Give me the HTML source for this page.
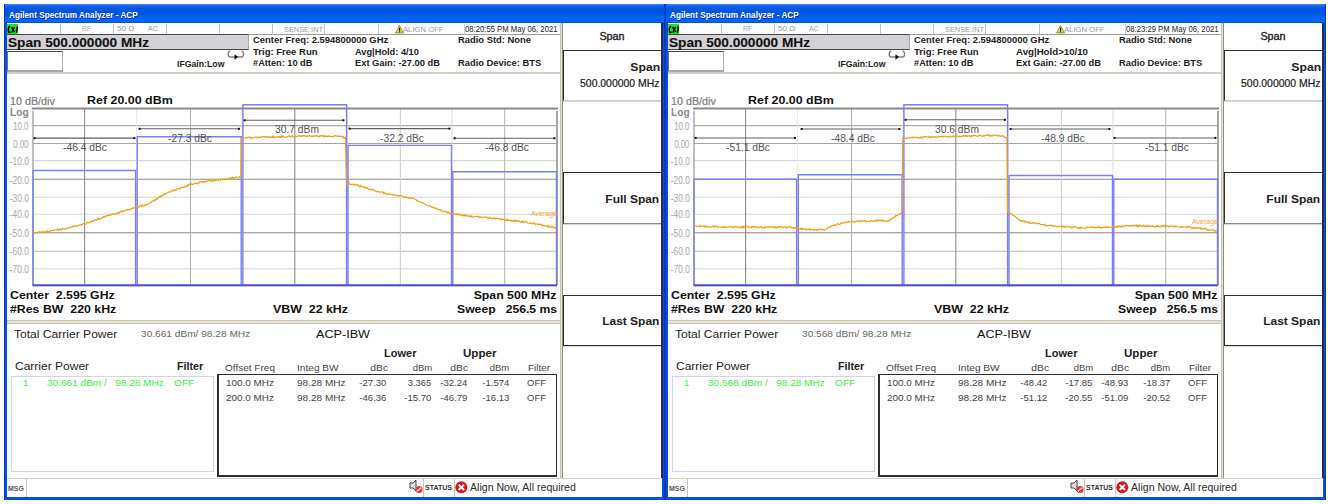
<!DOCTYPE html><html><head><meta charset="utf-8"><style>
html,body{margin:0;padding:0;background:#fff;width:1331px;height:504px;overflow:hidden;}
body{font-family:"Liberation Sans", sans-serif;position:relative;}
.t{position:absolute;white-space:nowrap;line-height:1;}
.r{position:absolute;}
.win{position:absolute;top:0;width:665px;height:504px;}
</style></head><body>
<div class="r" style="left:4.00px;top:4.00px;width:661.00px;height:495.50px;background:linear-gradient(#3a86ff 0px,#1a6cf0 1.5px,#0056e0 4px,#0055de 10px,#0066f6 14px,#0064f4 17.5px,#0046cc 19.3px,#0a50e4 21px,#0650e0);"></div>
<div class="r" style="left:7.00px;top:23.30px;width:655.00px;height:474.00px;background:#fff;"></div>
<div class="r" style="left:4.00px;top:4.00px;width:1.00px;height:495.50px;background:#0838c8;"></div>
<div class="r" style="left:664.00px;top:4.00px;width:1.20px;height:495.50px;background:#0838c8;"></div>
<div class="t" style="left:9.20px;top:11.07px;font-size:8.3px;font-weight:bold;color:#fff;text-shadow:0.5px 0.5px 0 #0a2a90;transform:scaleX(0.9918);transform-origin:left 0;">Agilent Spectrum Analyzer - ACP</div>
<div class="r" style="left:665.00px;top:4.00px;width:661.00px;height:495.50px;background:linear-gradient(#3a86ff 0px,#1a6cf0 1.5px,#0056e0 4px,#0055de 10px,#0066f6 14px,#0064f4 17.5px,#0046cc 19.3px,#0a50e4 21px,#0650e0);"></div>
<div class="r" style="left:668.00px;top:23.30px;width:655.00px;height:474.00px;background:#fff;"></div>
<div class="r" style="left:665.00px;top:4.00px;width:1.00px;height:495.50px;background:#0838c8;"></div>
<div class="r" style="left:1325.00px;top:4.00px;width:1.20px;height:495.50px;background:#0838c8;"></div>
<div class="t" style="left:670.20px;top:11.07px;font-size:8.3px;font-weight:bold;color:#fff;text-shadow:0.5px 0.5px 0 #0a2a90;transform:scaleX(0.9918);transform-origin:left 0;">Agilent Spectrum Analyzer - ACP</div>
<div class="win" style="left:0px">
<div class="r" style="left:7.00px;top:23.30px;width:553.00px;height:10.50px;background:#fff;"></div>
<div class="r" style="left:7.00px;top:24.00px;width:10.50px;height:9.50px;background:#1ee01e;"></div>
<svg class="r" style="left:7px;top:24px" width="11" height="10"><path d="M3,2 C1,3.5 0.8,7 2,8.5 L3.5,8 M4.5,3 L7.5,8 M7.5,3 L4.8,8.5 M10,2.5 C10.3,4.5 10.2,6.5 9.2,8.5" fill="none" stroke="#000" stroke-width="1.5"/></svg>
<div class="r" style="left:60.00px;top:23.50px;width:1.00px;height:10.00px;background:#c4c4c4;"></div>
<div class="r" style="left:112.50px;top:23.50px;width:1.00px;height:10.00px;background:#c4c4c4;"></div>
<div class="r" style="left:165.50px;top:23.50px;width:1.00px;height:10.00px;background:#c4c4c4;"></div>
<div class="r" style="left:218.50px;top:23.50px;width:1.00px;height:10.00px;background:#c4c4c4;"></div>
<div class="r" style="left:271.50px;top:23.50px;width:1.00px;height:10.00px;background:#c4c4c4;"></div>
<div class="r" style="left:324.00px;top:23.50px;width:1.00px;height:10.00px;background:#c4c4c4;"></div>
<div class="r" style="left:377.50px;top:23.50px;width:1.00px;height:10.00px;background:#c4c4c4;"></div>
<div class="t" style="left:81.50px;top:25.43px;font-size:8px;font-weight:normal;color:#9a9a9a;transform:scaleX(0.8527);transform-origin:left 0;">RF</div>
<div class="t" style="left:116.90px;top:25.43px;font-size:8px;font-weight:normal;color:#9a9a9a;transform:scaleX(1.0053);transform-origin:left 0;">50 &#937;</div>
<div class="t" style="left:147.70px;top:25.43px;font-size:8px;font-weight:normal;color:#9a9a9a;transform:scaleX(0.8719);transform-origin:left 0;">AC</div>
<div class="t" style="left:284.00px;top:25.85px;font-size:7.5px;font-weight:normal;color:#9a9a9a;transform:scaleX(0.9850);transform-origin:left 0;">SENSE:INT</div>
<svg class="r" style="left:394.5px;top:25px" width="9" height="8.5"><polygon points="4.5,0.5 8.5,8 0.5,8" fill="#f0e000" stroke="#666" stroke-width="0.7"/><rect x="4" y="2.8" width="1.1" height="3" fill="#000"/><rect x="4" y="6.3" width="1.1" height="1" fill="#000"/></svg>
<div class="t" style="left:402.50px;top:25.60px;font-size:7.8px;font-weight:normal;color:#9a9a9a;transform:scaleX(0.9841);transform-origin:left 0;">ALIGN OFF</div>
<div class="r" style="left:463.80px;top:24.00px;width:1.00px;height:9.50px;background:#d0d0d0;"></div>
<div class="t" style="left:464.60px;top:25.47px;font-size:8.3px;font-weight:normal;color:#222;transform:scaleX(0.9283);transform-origin:left 0;">08:20:55 PM May 06, 2021</div>
<div class="r" style="left:7.00px;top:33.50px;width:553.00px;height:1.00px;background:#a0a0a0;"></div>
<div class="r" style="left:7.00px;top:33.50px;width:241.50px;height:16.00px;background:#d3d1d5;border-top:1.5px solid #4a4a4a;border-bottom:1.5px solid #4a4a4a;border-right:1px solid #aaa;box-sizing:border-box;"></div>
<div class="t" style="left:7.80px;top:35.83px;font-size:13.2px;font-weight:bold;color:#111;-webkit-text-stroke:0.12px #111;transform:scaleX(1.0340);transform-origin:left 0;">Span 500.000000 MHz</div>
<div class="r" style="left:7.00px;top:51.00px;width:56.00px;height:20.50px;background:#fff;border-top:1.5px solid #505050;border-left:1px solid #707070;border-bottom:2px solid #a8a8a8;border-right:1px solid #b0b0b0;box-sizing:border-box;"></div>
<div class="t" style="left:177.00px;top:59.89px;font-size:8.4px;font-weight:bold;color:#222;transform:scaleX(1.0396);transform-origin:left 0;">IFGain:Low</div>
<svg class="r" style="left:227px;top:49px" width="19" height="11"><path d="M3.2,2 C0.6,2.6 0.3,8 3.5,8 L14.3,8 C17.5,8 17.2,2.6 14.6,2" fill="none" stroke="#808080" stroke-width="1.3"/><polygon points="7.5,5.3 11,8 7.5,10.8" fill="#000"/></svg>
<div class="t" style="left:252.50px;top:36.22px;font-size:8.6px;font-weight:bold;color:#222;transform:scaleX(1.0970);transform-origin:left 0;">Center Freq: 2.594800000 GHz</div>
<div class="t" style="left:252.50px;top:47.62px;font-size:8.6px;font-weight:bold;color:#222;transform:scaleX(1.1087);transform-origin:left 0;">Trig: Free Run</div>
<div class="t" style="left:252.50px;top:58.92px;font-size:8.6px;font-weight:bold;color:#222;transform:scaleX(1.0724);transform-origin:left 0;">#Atten: 10 dB</div>
<div class="t" style="left:355.40px;top:47.62px;font-size:8.6px;font-weight:bold;color:#222;transform:scaleX(1.0759);transform-origin:left 0;">Avg|Hold: 4/10</div>
<div class="t" style="left:355.40px;top:58.92px;font-size:8.6px;font-weight:bold;color:#222;transform:scaleX(1.0839);transform-origin:left 0;">Ext Gain: -27.00 dB</div>
<div class="t" style="left:457.80px;top:36.22px;font-size:8.6px;font-weight:bold;color:#222;transform:scaleX(1.0921);transform-origin:left 0;">Radio Std: None</div>
<div class="t" style="left:457.80px;top:58.92px;font-size:8.6px;font-weight:bold;color:#222;transform:scaleX(1.0887);transform-origin:left 0;">Radio Device: BTS</div>
<div class="r" style="left:7.00px;top:72.00px;width:553.00px;height:1.50px;background:#d2cec4;"></div>
<div class="t" style="left:10.00px;top:96.31px;font-size:10.5px;font-weight:normal;color:#7a7a7a;-webkit-text-stroke:0.2px #7a7a7a;transform:scaleX(1.0233);transform-origin:left 0;">10 dB/div</div>
<div class="t" style="left:87.00px;top:95.31px;font-size:11.8px;font-weight:bold;color:#111;transform:scaleX(1.0540);transform-origin:left 0;">Ref 20.00 dBm</div>
<div class="t" style="left:10.00px;top:106.61px;font-size:10.5px;font-weight:bold;color:#8a8a8a;transform:scaleX(0.9662);transform-origin:left 0;">Log</div>
<div class="t" style="right:636.20px;top:121.83px;font-size:10px;font-weight:normal;color:#a6a6a6;transform:scaleX(0.7807);transform-origin:right 0;">10.0</div>
<div class="t" style="right:636.20px;top:139.73px;font-size:10px;font-weight:normal;color:#a6a6a6;transform:scaleX(0.7807);transform-origin:right 0;">0.00</div>
<div class="t" style="right:636.20px;top:156.83px;font-size:10px;font-weight:normal;color:#a6a6a6;transform:scaleX(0.8334);transform-origin:right 0;">-10.0</div>
<div class="t" style="right:636.20px;top:175.53px;font-size:10px;font-weight:normal;color:#a6a6a6;transform:scaleX(0.8334);transform-origin:right 0;">-20.0</div>
<div class="t" style="right:636.20px;top:193.53px;font-size:10px;font-weight:normal;color:#a6a6a6;transform:scaleX(0.8334);transform-origin:right 0;">-30.0</div>
<div class="t" style="right:636.20px;top:210.43px;font-size:10px;font-weight:normal;color:#a6a6a6;transform:scaleX(0.8334);transform-origin:right 0;">-40.0</div>
<div class="t" style="right:636.20px;top:228.93px;font-size:10px;font-weight:normal;color:#a6a6a6;transform:scaleX(0.8334);transform-origin:right 0;">-50.0</div>
<div class="t" style="right:636.20px;top:247.43px;font-size:10px;font-weight:normal;color:#a6a6a6;transform:scaleX(0.8334);transform-origin:right 0;">-60.0</div>
<div class="t" style="right:636.20px;top:264.94px;font-size:10px;font-weight:normal;color:#a6a6a6;transform:scaleX(0.8334);transform-origin:right 0;">-70.0</div>
<svg class="r" style="left:0;top:0" width="665" height="320">
<line x1="33" y1="125.60" x2="556.5" y2="125.60" stroke="#acacac" stroke-width="1.1"/>
<line x1="33" y1="143.50" x2="556.5" y2="143.50" stroke="#a4a4a4" stroke-width="1.1"/>
<line x1="33" y1="160.60" x2="556.5" y2="160.60" stroke="#d8d8d8" stroke-width="1.1"/>
<line x1="33" y1="179.30" x2="556.5" y2="179.30" stroke="#8c8c8c" stroke-width="1.1"/>
<line x1="33" y1="197.30" x2="556.5" y2="197.30" stroke="#d8d8d8" stroke-width="1.1"/>
<line x1="33" y1="214.20" x2="556.5" y2="214.20" stroke="#d8d8d8" stroke-width="1.1"/>
<line x1="33" y1="232.70" x2="556.5" y2="232.70" stroke="#8c8c8c" stroke-width="1.1"/>
<line x1="33" y1="251.20" x2="556.5" y2="251.20" stroke="#b8b8b8" stroke-width="1.1"/>
<line x1="33" y1="268.70" x2="556.5" y2="268.70" stroke="#d8d8d8" stroke-width="1.1"/>
<line x1="84.60" y1="108.4" x2="84.60" y2="284.7" stroke="#8c8c8c" stroke-width="1.1"/>
<line x1="136.50" y1="108.4" x2="136.50" y2="284.7" stroke="#e8e8e8" stroke-width="1.1"/>
<line x1="190.50" y1="108.4" x2="190.50" y2="284.7" stroke="#b4b4b4" stroke-width="1.1"/>
<line x1="242.00" y1="108.4" x2="242.00" y2="284.7" stroke="#e4e4e4" stroke-width="1.1"/>
<line x1="294.80" y1="108.4" x2="294.80" y2="284.7" stroke="#8c8c8c" stroke-width="1.1"/>
<line x1="347.00" y1="108.4" x2="347.00" y2="284.7" stroke="#e4e4e4" stroke-width="1.1"/>
<line x1="400.40" y1="108.4" x2="400.40" y2="284.7" stroke="#d2d2d2" stroke-width="1.1"/>
<line x1="452.00" y1="108.4" x2="452.00" y2="284.7" stroke="#dedede" stroke-width="1.1"/>
<line x1="504.70" y1="108.4" x2="504.70" y2="284.7" stroke="#b8b8b8" stroke-width="1.1"/>
<line x1="32" y1="108.4" x2="558" y2="108.4" stroke="#8a8a8a" stroke-width="2"/>
<line x1="33" y1="110.8" x2="33" y2="285" stroke="#959595" stroke-width="1.2"/>
<line x1="557" y1="111" x2="557" y2="285" stroke="#8a8a8a" stroke-width="1.5"/>
<polyline points="33,285 33,170.5 135.6,170.5 135.6,285" fill="none" stroke="#7c7cff" stroke-width="1.4"/>
<polyline points="137.2,285 137.2,136.8 241.2,136.8 241.2,285" fill="none" stroke="#7c7cff" stroke-width="1.4"/>
<polyline points="242.9,285 242.9,104.8 346.6,104.8 346.6,285" fill="none" stroke="#7c7cff" stroke-width="1.4"/>
<polyline points="348,285 348,145.4 451.5,145.4 451.5,285" fill="none" stroke="#7c7cff" stroke-width="1.4"/>
<polyline points="452.8,285 452.8,171.7 556.5,171.7 556.5,285" fill="none" stroke="#7c7cff" stroke-width="1.4"/>
<line x1="32.5" y1="286.2" x2="557" y2="286.2" stroke="#a8a8a8" stroke-width="1"/>
<line x1="32.5" y1="285.1" x2="557" y2="285.1" stroke="#5050c8" stroke-width="1.6"/>
<path d="M33.0,232.4 L33.7,233.4 L34.4,233.2 L35.1,232.4 L35.8,232.7 L36.5,232.5 L37.2,232.8 L37.9,232.9 L38.6,231.8 L39.3,231.7 L40.0,232.8 L40.7,232.1 L41.4,232.6 L42.1,231.4 L42.8,232.0 L43.5,232.3 L44.2,231.5 L44.9,232.5 L45.6,232.4 L46.3,231.1 L47.0,231.0 L47.7,231.6 L48.4,232.1 L49.1,231.2 L49.8,230.8 L50.5,231.0 L51.2,230.3 L52.0,230.4 L52.7,230.6 L53.4,230.6 L54.1,230.1 L54.8,230.0 L55.5,229.8 L56.2,230.1 L56.9,229.7 L57.6,229.2 L58.3,230.3 L59.0,229.7 L59.8,229.7 L60.5,228.9 L61.2,230.0 L61.9,229.7 L62.6,228.5 L63.3,228.7 L64.0,229.1 L64.7,228.9 L65.4,229.1 L66.1,228.2 L66.9,228.6 L67.6,228.2 L68.3,227.5 L69.0,227.8 L69.7,228.0 L70.4,227.8 L71.1,227.1 L71.9,227.1 L72.6,226.1 L73.3,226.2 L74.0,226.9 L74.7,226.2 L75.4,225.6 L76.1,226.0 L76.9,226.1 L77.6,225.9 L78.3,225.3 L79.0,225.2 L79.7,225.1 L80.4,225.4 L81.1,224.8 L81.9,224.4 L82.6,224.4 L83.3,223.6 L84.0,223.4 L84.7,224.2 L85.4,224.3 L86.1,223.5 L86.8,222.9 L87.5,222.3 L88.3,222.6 L89.0,223.0 L89.7,222.5 L90.4,221.9 L91.1,222.1 L91.8,220.9 L92.5,221.1 L93.2,221.5 L93.9,220.6 L94.6,220.2 L95.4,219.7 L96.1,219.8 L96.8,220.2 L97.5,218.5 L98.2,219.4 L98.9,219.2 L99.6,219.1 L100.3,218.6 L101.0,218.4 L101.7,217.8 L102.5,217.6 L103.2,217.1 L103.9,216.3 L104.6,217.3 L105.3,216.6 L106.0,215.7 L106.7,216.0 L107.4,215.8 L108.1,215.4 L108.8,215.2 L109.5,215.3 L110.2,215.2 L111.0,215.0 L111.7,214.6 L112.4,213.7 L113.1,213.8 L113.8,213.6 L114.5,214.0 L115.2,214.2 L115.9,213.9 L116.6,213.7 L117.3,213.5 L118.0,212.5 L118.8,213.2 L119.5,212.7 L120.2,211.7 L120.9,211.4 L121.6,211.2 L122.3,212.1 L123.0,211.1 L123.7,210.7 L124.4,211.3 L125.2,210.6 L125.9,210.0 L126.6,209.9 L127.3,210.2 L128.1,209.5 L128.8,209.4 L129.5,209.9 L130.2,209.3 L130.9,208.8 L131.7,208.9 L132.4,208.0 L133.1,208.3 L133.8,208.1 L134.6,207.6 L135.3,207.2 L136.0,208.2 L136.7,207.4 L137.4,206.8 L138.1,207.2 L138.8,207.3 L139.5,205.9 L140.2,205.7 L140.9,205.7 L141.6,206.3 L142.4,205.3 L143.1,205.9 L143.8,205.7 L144.5,205.3 L145.2,204.6 L145.9,205.5 L146.6,205.0 L147.3,204.4 L148.0,203.8 L148.7,204.0 L149.4,203.2 L150.1,203.0 L150.8,202.2 L151.5,202.2 L152.2,200.9 L153.0,200.8 L153.7,201.4 L154.4,200.8 L155.1,199.5 L155.8,199.9 L156.5,198.7 L157.2,199.2 L157.9,198.4 L158.6,197.5 L159.3,196.8 L160.0,196.0 L160.8,196.9 L161.5,195.2 L162.2,195.9 L162.9,195.7 L163.6,194.7 L164.3,193.6 L165.0,194.3 L165.7,194.1 L166.4,193.5 L167.1,192.9 L167.9,192.5 L168.6,192.2 L169.3,191.7 L170.0,192.1 L170.7,191.5 L171.4,190.9 L172.1,190.5 L172.9,191.1 L173.6,190.2 L174.3,190.3 L175.0,189.8 L175.7,190.3 L176.4,190.1 L177.1,188.5 L177.9,188.5 L178.6,188.4 L179.3,189.2 L180.0,188.6 L180.7,187.7 L181.4,187.2 L182.1,187.7 L182.9,187.6 L183.6,187.5 L184.3,186.4 L185.0,186.9 L185.7,186.4 L186.4,185.8 L187.1,186.3 L187.9,184.9 L188.6,185.4 L189.3,184.1 L190.0,184.0 L190.7,185.0 L191.4,183.8 L192.1,184.5 L192.8,184.1 L193.5,184.3 L194.2,183.5 L195.0,183.3 L195.7,183.1 L196.4,183.8 L197.1,183.2 L197.8,183.6 L198.5,183.4 L199.2,182.1 L199.9,182.6 L200.6,181.8 L201.3,181.5 L202.0,181.5 L202.8,182.5 L203.5,182.2 L204.2,182.2 L204.9,181.3 L205.6,181.6 L206.3,181.7 L207.0,180.9 L207.7,181.1 L208.4,180.5 L209.1,180.3 L209.8,180.5 L210.5,181.3 L211.2,180.8 L212.0,181.2 L212.7,180.5 L213.4,180.1 L214.1,180.8 L214.8,180.8 L215.5,179.5 L216.2,180.4 L216.9,179.5 L217.6,179.5 L218.3,180.5 L219.0,179.2 L219.8,179.4 L220.5,180.5 L221.2,179.6 L221.9,179.0 L222.6,179.0 L223.3,179.1 L224.0,179.8 L224.7,178.7 L225.4,179.8 L226.1,178.9 L226.8,179.7 L227.5,179.5 L228.2,178.5 L229.0,178.3 L229.7,178.5 L230.4,177.9 L231.1,178.6 L231.8,177.6 L232.5,177.4 L233.2,178.8 L233.9,177.6 L234.6,178.0 L235.3,177.7 L236.0,177.3 L236.8,176.9 L237.5,178.0 L238.2,178.0 L238.9,177.9 L239.6,176.5 L240.3,176.6 L241.0,176.9 L241.8,138.0 L243.0,138.0 L243.7,138.5 L244.4,137.8 L245.1,138.0 L245.8,138.0 L246.6,137.3 L247.3,137.7 L248.0,137.4 L248.7,137.3 L249.4,137.0 L250.1,137.3 L250.8,138.3 L251.5,137.5 L252.2,137.8 L252.9,137.7 L253.7,138.1 L254.4,137.3 L255.1,137.2 L255.8,137.2 L256.5,137.1 L257.2,137.9 L257.9,137.9 L258.6,137.0 L259.3,137.1 L260.1,137.4 L260.8,137.4 L261.5,137.4 L262.2,136.8 L262.9,136.5 L263.6,136.8 L264.3,136.5 L265.0,137.2 L265.7,136.5 L266.4,136.5 L267.2,137.3 L267.9,136.7 L268.6,137.5 L269.3,137.0 L270.0,137.5 L270.7,136.5 L271.4,137.0 L272.1,137.4 L272.8,136.3 L273.5,137.6 L274.2,136.4 L274.9,137.3 L275.6,137.6 L276.3,137.3 L277.0,136.5 L277.7,136.2 L278.4,136.8 L279.1,137.4 L279.8,136.4 L280.5,137.3 L281.2,136.2 L281.9,137.3 L282.6,136.0 L283.4,136.4 L284.1,137.2 L284.8,137.1 L285.5,137.2 L286.2,137.1 L286.9,136.9 L287.6,136.8 L288.3,136.0 L289.0,136.4 L289.7,136.0 L290.4,136.8 L291.1,136.7 L291.8,136.0 L292.5,135.7 L293.2,137.1 L293.9,136.8 L294.6,136.4 L295.3,136.4 L296.0,136.8 L296.7,136.2 L297.4,136.1 L298.1,136.0 L298.8,135.9 L299.5,135.5 L300.2,136.5 L300.9,136.1 L301.6,136.3 L302.4,135.6 L303.1,136.0 L303.8,135.7 L304.5,135.6 L305.2,135.8 L305.9,136.7 L306.6,136.0 L307.3,136.0 L308.0,136.3 L308.7,135.7 L309.4,135.4 L310.1,136.2 L310.8,136.1 L311.5,136.3 L312.2,136.0 L312.9,136.4 L313.6,136.4 L314.4,135.7 L315.1,136.1 L315.8,136.0 L316.5,135.6 L317.2,135.9 L317.9,136.1 L318.6,136.6 L319.3,136.6 L320.0,135.7 L320.7,136.2 L321.4,135.3 L322.1,135.4 L322.9,136.0 L323.6,136.6 L324.3,135.5 L325.0,136.4 L325.7,136.6 L326.4,135.8 L327.1,136.4 L327.9,136.6 L328.6,135.9 L329.3,136.4 L330.0,136.5 L330.7,136.2 L331.4,136.6 L332.1,136.7 L332.9,136.8 L333.6,136.2 L334.3,135.7 L335.0,135.8 L335.7,135.7 L336.4,136.3 L337.1,136.6 L337.9,135.5 L338.6,136.5 L339.3,136.5 L340.0,136.0 L340.8,136.4 L341.6,136.1 L342.4,137.1 L343.1,136.3 L343.9,137.9 L344.7,137.8 L345.5,137.5 L346.5,183.8 L347.2,183.3 L347.9,184.4 L348.6,184.5 L349.3,183.4 L350.0,184.4 L350.8,184.6 L351.5,184.4 L352.2,184.5 L352.9,184.2 L353.6,185.0 L354.3,185.1 L355.0,184.3 L355.7,185.2 L356.4,184.9 L357.1,184.7 L357.8,185.1 L358.5,185.1 L359.2,186.5 L359.9,186.8 L360.6,185.7 L361.3,186.7 L362.0,186.6 L362.8,186.4 L363.5,186.9 L364.2,187.1 L364.9,188.1 L365.6,187.2 L366.3,187.7 L367.0,188.3 L367.7,187.9 L368.4,189.0 L369.1,189.2 L369.8,189.8 L370.5,189.1 L371.2,189.4 L371.9,189.9 L372.6,189.7 L373.4,190.3 L374.1,190.0 L374.8,190.8 L375.5,191.2 L376.2,191.4 L376.9,191.8 L377.6,191.4 L378.4,191.5 L379.1,192.2 L379.8,192.2 L380.5,192.1 L381.2,192.0 L381.9,192.0 L382.6,191.9 L383.4,193.2 L384.1,192.3 L384.8,193.4 L385.5,193.3 L386.2,194.1 L386.9,194.0 L387.6,194.5 L388.4,193.4 L389.1,194.1 L389.8,194.4 L390.5,194.2 L391.2,194.6 L391.9,194.5 L392.6,194.9 L393.4,194.2 L394.1,194.9 L394.8,195.1 L395.5,195.0 L396.2,195.2 L396.9,195.9 L397.6,195.8 L398.4,195.7 L399.1,196.0 L399.8,195.7 L400.5,195.6 L401.2,195.4 L402.0,196.0 L402.7,196.6 L403.4,197.2 L404.2,197.2 L404.9,196.9 L405.6,197.8 L406.4,197.1 L407.1,197.8 L407.9,197.3 L408.6,198.0 L409.3,198.5 L410.1,197.6 L410.8,197.6 L411.5,198.4 L412.3,198.4 L413.0,198.3 L413.7,198.1 L414.4,199.0 L415.1,199.3 L415.9,199.6 L416.6,200.6 L417.3,200.5 L418.0,201.1 L418.7,201.6 L419.4,201.7 L420.1,201.6 L420.9,202.3 L421.6,202.5 L422.3,202.8 L423.0,203.1 L423.7,203.1 L424.4,203.7 L425.1,204.0 L425.9,204.8 L426.6,204.9 L427.3,205.3 L428.0,205.5 L428.7,205.9 L429.4,205.9 L430.1,205.8 L430.9,206.0 L431.6,207.0 L432.3,207.5 L433.0,207.4 L433.7,207.1 L434.4,208.4 L435.1,208.2 L435.9,208.5 L436.6,208.2 L437.3,209.2 L438.0,209.9 L438.7,209.6 L439.5,209.7 L440.2,210.4 L440.9,209.7 L441.7,210.6 L442.4,211.5 L443.1,211.4 L443.9,211.1 L444.6,211.8 L445.4,211.9 L446.1,211.5 L446.8,211.7 L447.6,213.0 L448.3,212.3 L449.0,212.2 L449.8,213.6 L450.5,213.3 L451.2,213.2 L451.9,213.5 L452.6,214.0 L453.4,213.2 L454.1,214.1 L454.8,214.3 L455.5,214.5 L456.2,213.8 L456.9,214.4 L457.6,214.0 L458.4,214.6 L459.1,214.1 L459.8,215.1 L460.5,215.4 L461.2,214.7 L461.9,214.6 L462.6,215.8 L463.4,215.5 L464.1,215.9 L464.8,214.7 L465.5,216.1 L466.2,215.8 L466.9,215.5 L467.6,215.8 L468.4,216.4 L469.1,216.5 L469.8,215.7 L470.5,216.5 L471.2,215.9 L471.9,217.1 L472.6,216.4 L473.4,217.2 L474.1,217.0 L474.8,216.8 L475.5,216.4 L476.2,216.8 L476.9,216.3 L477.6,216.4 L478.4,217.3 L479.1,216.8 L479.8,217.5 L480.5,216.8 L481.2,217.6 L481.9,217.6 L482.6,217.1 L483.4,216.8 L484.1,217.3 L484.8,217.5 L485.5,217.0 L486.2,217.2 L486.9,217.1 L487.6,218.0 L488.4,218.5 L489.1,217.5 L489.8,217.3 L490.5,218.4 L491.2,218.6 L491.9,218.9 L492.6,218.4 L493.4,218.1 L494.1,218.9 L494.8,217.9 L495.5,218.8 L496.2,218.0 L496.9,218.5 L497.6,218.8 L498.3,218.7 L499.0,218.5 L499.7,218.6 L500.5,219.6 L501.2,219.2 L501.9,219.4 L502.6,219.0 L503.3,219.8 L504.0,219.3 L504.7,219.8 L505.4,220.4 L506.1,220.6 L506.8,219.3 L507.5,220.5 L508.2,220.7 L508.9,220.0 L509.7,220.1 L510.4,220.5 L511.1,221.1 L511.8,220.4 L512.5,221.2 L513.2,221.2 L513.9,220.3 L514.6,221.6 L515.3,220.3 L516.0,220.6 L516.7,221.5 L517.4,220.6 L518.1,221.2 L518.8,220.9 L519.6,221.5 L520.3,222.2 L521.0,222.4 L521.7,221.2 L522.4,221.3 L523.1,222.5 L523.8,221.4 L524.5,221.9 L525.2,221.7 L525.9,221.8 L526.6,221.8 L527.3,222.8 L528.0,223.0 L528.8,223.0 L529.5,223.4 L530.2,223.2 L530.9,222.9 L531.6,223.3 L532.3,223.9 L533.0,223.5 L533.7,223.1 L534.4,222.9 L535.2,224.4 L535.9,224.0 L536.6,223.8 L537.3,224.3 L538.0,224.4 L538.8,224.5 L539.5,223.9 L540.2,224.5 L540.9,224.7 L541.6,224.5 L542.3,225.7 L543.1,225.2 L543.8,225.7 L544.5,225.9 L545.2,226.1 L545.9,226.2 L546.7,226.4 L547.4,225.7 L548.1,227.0 L548.8,225.9 L549.5,227.2 L550.2,227.2 L551.0,227.3 L551.7,226.3 L552.4,226.5 L553.1,227.7 L553.8,227.3 L554.6,227.3 L555.3,228.4 L556.0,227.8" fill="none" stroke="#f0a014" stroke-width="1.2"/>
<line x1="34" y1="138.10000000000002" x2="135" y2="138.10000000000002" stroke="#606060" stroke-width="1.05"/>
<rect x="33.6" y="137.10000000000002" width="2" height="2" fill="#111"/>
<rect x="133.4" y="137.10000000000002" width="2" height="2" fill="#111"/>
<line x1="139" y1="128.8" x2="239.5" y2="128.8" stroke="#606060" stroke-width="1.05"/>
<rect x="138.6" y="127.80000000000001" width="2" height="2" fill="#111"/>
<rect x="237.9" y="127.80000000000001" width="2" height="2" fill="#111"/>
<line x1="244" y1="120.3" x2="344" y2="120.3" stroke="#606060" stroke-width="1.05"/>
<rect x="243.6" y="119.3" width="2" height="2" fill="#111"/>
<rect x="342.4" y="119.3" width="2" height="2" fill="#111"/>
<line x1="349" y1="128.60000000000002" x2="450" y2="128.60000000000002" stroke="#606060" stroke-width="1.05"/>
<rect x="348.6" y="127.60000000000002" width="2" height="2" fill="#111"/>
<rect x="448.4" y="127.60000000000002" width="2" height="2" fill="#111"/>
<line x1="454" y1="138.3" x2="555" y2="138.3" stroke="#606060" stroke-width="1.05"/>
<rect x="453.6" y="137.3" width="2" height="2" fill="#111"/>
<rect x="553.4" y="137.3" width="2" height="2" fill="#111"/>
</svg>
<div class="t" style="left:85.00px;top:143.03px;font-size:10px;font-weight:normal;color:#555;transform:translateX(-50%) scaleX(1.0277);transform-origin:center 0;">-46.4 dBc</div>
<div class="t" style="left:190.00px;top:134.13px;font-size:10px;font-weight:normal;color:#555;transform:translateX(-50%) scaleX(1.0277);transform-origin:center 0;">-27.3 dBc</div>
<div class="t" style="left:296.70px;top:124.53px;font-size:10px;font-weight:normal;color:#555;transform:translateX(-50%) scaleX(1.0277);transform-origin:center 0;">30.7 dBm</div>
<div class="t" style="left:401.70px;top:133.83px;font-size:10px;font-weight:normal;color:#555;transform:translateX(-50%) scaleX(1.0277);transform-origin:center 0;">-32.2 dBc</div>
<div class="t" style="left:507.00px;top:142.83px;font-size:10px;font-weight:normal;color:#555;transform:translateX(-50%) scaleX(1.0277);transform-origin:center 0;">-46.8 dBc</div>
<div class="t" style="right:108.00px;top:210.07px;font-size:7px;font-weight:normal;color:#f0a830;transform:scaleX(1.0018);transform-origin:right 0;">Average</div>
<div class="t" style="left:9.50px;top:290.11px;font-size:11.8px;font-weight:bold;color:#111;transform:scaleX(1.0436);transform-origin:left 0;">Center&nbsp; 2.595 GHz</div>
<div class="t" style="left:9.50px;top:304.01px;font-size:11.8px;font-weight:bold;color:#111;transform:scaleX(1.0449);transform-origin:left 0;">#Res BW&nbsp; 220 kHz</div>
<div class="t" style="left:272.80px;top:304.01px;font-size:11.8px;font-weight:bold;color:#111;transform:scaleX(1.0494);transform-origin:left 0;">VBW&nbsp; 22 kHz</div>
<div class="t" style="right:108.30px;top:290.11px;font-size:11.8px;font-weight:bold;color:#111;transform:scaleX(1.0425);transform-origin:right 0;">Span 500 MHz</div>
<div class="t" style="right:108.30px;top:304.01px;font-size:11.8px;font-weight:bold;color:#111;transform:scaleX(1.0303);transform-origin:right 0;">Sweep&nbsp;&nbsp; 256.5 ms</div>
<div class="r" style="left:7.00px;top:319.50px;width:553.00px;height:4.00px;background:#e4e0d4;border-top:1px solid #c9c4b4;border-bottom:1px solid #c9c4b4;box-sizing:border-box;"></div>
<div class="t" style="left:13.80px;top:329.13px;font-size:11.3px;font-weight:normal;color:#1e1e1e;transform:scaleX(1.0684);transform-origin:left 0;">Total Carrier Power</div>
<div class="t" style="left:140.80px;top:329.06px;font-size:9.5px;font-weight:normal;color:#666;transform:scaleX(1.0659);transform-origin:left 0;">30.661 dBm/ 98.28 MHz</div>
<div class="t" style="left:316.00px;top:329.27px;font-size:11.5px;font-weight:normal;color:#111;transform:scaleX(1.0975);transform-origin:left 0;">ACP-IBW</div>
<div class="t" style="left:14.60px;top:360.93px;font-size:11.3px;font-weight:normal;color:#1e1e1e;transform:scaleX(1.0633);transform-origin:left 0;">Carrier Power</div>
<div class="t" style="left:176.60px;top:360.69px;font-size:11px;font-weight:bold;color:#222;transform:scaleX(0.9775);transform-origin:left 0;">Filter</div>
<div class="t" style="left:383.70px;top:348.13px;font-size:11.3px;font-weight:bold;color:#222;transform:scaleX(0.9765);transform-origin:left 0;">Lower</div>
<div class="t" style="left:463.40px;top:348.13px;font-size:11.3px;font-weight:bold;color:#222;transform:scaleX(1.0233);transform-origin:left 0;">Upper</div>
<div class="t" style="left:225.00px;top:363.83px;font-size:9.3px;font-weight:normal;color:#444;transform:scaleX(1.0789);transform-origin:left 0;">Offset Freq</div>
<div class="t" style="left:296.50px;top:363.83px;font-size:9.3px;font-weight:normal;color:#444;transform:scaleX(1.0902);transform-origin:left 0;">Integ BW</div>
<div class="t" style="right:277.30px;top:363.83px;font-size:9.3px;font-weight:normal;color:#444;transform:scaleX(1.1041);transform-origin:right 0;">dBc</div>
<div class="t" style="right:233.10px;top:363.83px;font-size:9.3px;font-weight:normal;color:#444;transform:scaleX(1.0196);transform-origin:right 0;">dBm</div>
<div class="t" style="right:197.10px;top:363.83px;font-size:9.3px;font-weight:normal;color:#444;transform:scaleX(1.1041);transform-origin:right 0;">dBc</div>
<div class="t" style="right:155.60px;top:363.83px;font-size:9.3px;font-weight:normal;color:#444;transform:scaleX(1.0196);transform-origin:right 0;">dBm</div>
<div class="t" style="left:528.30px;top:363.83px;font-size:9.3px;font-weight:normal;color:#444;transform:scaleX(1.0642);transform-origin:left 0;">Filter</div>
<div class="r" style="left:10.80px;top:375.60px;width:203.20px;height:96.00px;border:1px solid #ccd8e6;box-sizing:border-box;"></div>
<div class="t" style="left:23.00px;top:378.63px;font-size:9.3px;font-weight:normal;color:#40ee40;">1</div>
<div class="t" style="left:47.00px;top:378.63px;font-size:9.3px;font-weight:normal;color:#40ee40;transform:scaleX(1.0813);transform-origin:left 0;">30.661 dBm /&nbsp;&nbsp; 98.28 MHz</div>
<div class="t" style="left:173.60px;top:378.63px;font-size:9.3px;font-weight:normal;color:#40ee40;transform:scaleX(1.0918);transform-origin:left 0;">OFF</div>
<div class="r" style="left:216.60px;top:374.30px;width:340.20px;height:103.00px;border:1.7px solid #303030;border-left-width:2.2px;border-bottom-width:2.4px;box-sizing:border-box;"></div>
<div class="t" style="left:226.00px;top:378.73px;font-size:9.3px;font-weight:normal;color:#444;transform:scaleX(1.0674);transform-origin:left 0;">100.0 MHz</div>
<div class="t" style="left:296.50px;top:378.73px;font-size:9.3px;font-weight:normal;color:#444;transform:scaleX(1.0808);transform-origin:left 0;">98.28 MHz</div>
<div class="t" style="right:278.50px;top:378.73px;font-size:9.3px;font-weight:normal;color:#444;transform:scaleX(1.0237);transform-origin:right 0;">-27.30</div>
<div class="t" style="right:234.00px;top:378.73px;font-size:9.3px;font-weight:normal;color:#444;transform:scaleX(1.0101);transform-origin:right 0;">3.365</div>
<div class="t" style="right:198.00px;top:378.73px;font-size:9.3px;font-weight:normal;color:#444;transform:scaleX(1.0237);transform-origin:right 0;">-32.24</div>
<div class="t" style="right:156.00px;top:378.73px;font-size:9.3px;font-weight:normal;color:#444;transform:scaleX(1.0237);transform-origin:right 0;">-1.574</div>
<div class="t" style="left:527.00px;top:378.73px;font-size:9.3px;font-weight:normal;color:#444;transform:scaleX(1.0218);transform-origin:left 0;">OFF</div>
<div class="t" style="left:226.00px;top:394.43px;font-size:9.3px;font-weight:normal;color:#444;transform:scaleX(1.0674);transform-origin:left 0;">200.0 MHz</div>
<div class="t" style="left:296.50px;top:394.43px;font-size:9.3px;font-weight:normal;color:#444;transform:scaleX(1.0808);transform-origin:left 0;">98.28 MHz</div>
<div class="t" style="right:278.50px;top:394.43px;font-size:9.3px;font-weight:normal;color:#444;transform:scaleX(1.0237);transform-origin:right 0;">-46.36</div>
<div class="t" style="right:234.00px;top:394.43px;font-size:9.3px;font-weight:normal;color:#444;transform:scaleX(1.0237);transform-origin:right 0;">-15.70</div>
<div class="t" style="right:198.00px;top:394.43px;font-size:9.3px;font-weight:normal;color:#444;transform:scaleX(1.0237);transform-origin:right 0;">-46.79</div>
<div class="t" style="right:156.00px;top:394.43px;font-size:9.3px;font-weight:normal;color:#444;transform:scaleX(1.0237);transform-origin:right 0;">-16.13</div>
<div class="t" style="left:527.00px;top:394.43px;font-size:9.3px;font-weight:normal;color:#444;transform:scaleX(1.0218);transform-origin:left 0;">OFF</div>
<div class="r" style="left:559.50px;top:23.00px;width:3.00px;height:455.50px;background:#e6e2d6;border-left:1px solid #c8c3b3;border-right:1px solid #8c8a84;box-sizing:border-box;"></div>
<div class="t" style="left:612.20px;top:31.21px;font-size:10.5px;font-weight:normal;color:#222;-webkit-text-stroke:0.35px #222;transform:translateX(-50%) scaleX(1.0273);transform-origin:center 0;">Span</div>
<div class="r" style="left:562.50px;top:49.50px;width:99.50px;height:51.20px;border-top:1.5px solid #303030;border-left:1.5px solid #303030;border-bottom:1.5px solid #cccccc;box-sizing:border-box;"></div>
<div class="r" style="left:562.50px;top:100.70px;width:99.50px;height:71.70px;border-top:1px solid #d8d8d8;box-sizing:border-box;"></div>
<div class="r" style="left:562.50px;top:172.40px;width:99.50px;height:51.80px;border-top:1.5px solid #303030;border-left:1.5px solid #303030;border-bottom:1.5px solid #8a8a8a;box-sizing:border-box;"></div>
<div class="r" style="left:562.50px;top:224.20px;width:99.50px;height:71.00px;border-top:1px solid #d8d8d8;box-sizing:border-box;"></div>
<div class="r" style="left:562.50px;top:295.20px;width:99.50px;height:51.10px;border-top:1.5px solid #303030;border-left:1.5px solid #303030;border-bottom:1.5px solid #303030;box-sizing:border-box;"></div>
<div class="r" style="left:562.50px;top:346.30px;width:99.50px;height:132.20px;border-top:1px solid #d8d8d8;box-sizing:border-box;"></div>
<div class="r" style="left:661.00px;top:23.30px;width:1.80px;height:455.00px;background:#2a2a50;"></div>
<div class="t" style="right:5.20px;top:62.17px;font-size:11.5px;font-weight:bold;color:#222;transform:scaleX(1.0596);transform-origin:right 0;">Span</div>
<div class="t" style="right:5.20px;top:79.48px;font-size:10.3px;font-weight:normal;color:#1a1a1a;-webkit-text-stroke:0.2px #1a1a1a;transform:scaleX(1.0123);transform-origin:right 0;">500.000000 MHz</div>
<div class="t" style="right:5.50px;top:193.18px;font-size:11.6px;font-weight:bold;color:#222;transform:scaleX(1.0312);transform-origin:right 0;">Full Span</div>
<div class="t" style="right:5.50px;top:315.71px;font-size:11.8px;font-weight:bold;color:#222;transform:scaleX(1.0144);transform-origin:right 0;">Last Span</div>
<div class="r" style="left:7.00px;top:478.00px;width:655.00px;height:19.00px;background:#fff;border-top:1.5px solid #d6d2c6;box-sizing:border-box;"></div>
<div class="r" style="left:26.00px;top:479.00px;width:1.00px;height:18.00px;background:#c8c3b3;"></div>
<div class="t" style="left:8.00px;top:485.27px;font-size:7px;font-weight:bold;color:#555;transform:scaleX(1.0029);transform-origin:left 0;">MSG</div>
<div class="r" style="left:423.00px;top:479.00px;width:1.00px;height:18.00px;background:#c8c3b3;"></div>
<div class="r" style="left:454.00px;top:479.00px;width:1.00px;height:18.00px;background:#c8c3b3;"></div>
<svg class="r" style="left:409px;top:479px" width="15" height="15"><path d="M1,4 L4,4 L7,1 L7,12 L4,9 L1,9 Z" fill="#ddd" stroke="#444" stroke-width="1"/><circle cx="10" cy="10.5" r="3.6" fill="#e33" /><line x1="7.8" y1="12.3" x2="12.2" y2="8.7" stroke="#fff" stroke-width="1.2"/></svg>
<div class="t" style="left:424.50px;top:484.67px;font-size:6.3px;font-weight:bold;color:#333;transform:scaleX(1.1127);transform-origin:left 0;">STATUS</div>
<svg class="r" style="left:455px;top:481px" width="13" height="13"><circle cx="6.3" cy="6.3" r="6" fill="#d81818"/><path d="M3.6,3.6 L9,9 M9,3.6 L3.6,9" stroke="#fff" stroke-width="2"/></svg>
<div class="t" style="left:469.50px;top:482.31px;font-size:10.5px;font-weight:normal;color:#2a2a2a;transform:scaleX(1.0070);transform-origin:left 0;">Align Now, All required</div>
</div>
<div class="win" style="left:661px">
<div class="r" style="left:7.00px;top:23.30px;width:553.00px;height:10.50px;background:#fff;"></div>
<div class="r" style="left:7.00px;top:24.00px;width:10.50px;height:9.50px;background:#1ee01e;"></div>
<svg class="r" style="left:7px;top:24px" width="11" height="10"><path d="M3,2 C1,3.5 0.8,7 2,8.5 L3.5,8 M4.5,3 L7.5,8 M7.5,3 L4.8,8.5 M10,2.5 C10.3,4.5 10.2,6.5 9.2,8.5" fill="none" stroke="#000" stroke-width="1.5"/></svg>
<div class="r" style="left:60.00px;top:23.50px;width:1.00px;height:10.00px;background:#c4c4c4;"></div>
<div class="r" style="left:112.50px;top:23.50px;width:1.00px;height:10.00px;background:#c4c4c4;"></div>
<div class="r" style="left:165.50px;top:23.50px;width:1.00px;height:10.00px;background:#c4c4c4;"></div>
<div class="r" style="left:218.50px;top:23.50px;width:1.00px;height:10.00px;background:#c4c4c4;"></div>
<div class="r" style="left:271.50px;top:23.50px;width:1.00px;height:10.00px;background:#c4c4c4;"></div>
<div class="r" style="left:324.00px;top:23.50px;width:1.00px;height:10.00px;background:#c4c4c4;"></div>
<div class="r" style="left:377.50px;top:23.50px;width:1.00px;height:10.00px;background:#c4c4c4;"></div>
<div class="t" style="left:81.50px;top:25.43px;font-size:8px;font-weight:normal;color:#9a9a9a;transform:scaleX(0.8527);transform-origin:left 0;">RF</div>
<div class="t" style="left:116.90px;top:25.43px;font-size:8px;font-weight:normal;color:#9a9a9a;transform:scaleX(1.0053);transform-origin:left 0;">50 &#937;</div>
<div class="t" style="left:147.70px;top:25.43px;font-size:8px;font-weight:normal;color:#9a9a9a;transform:scaleX(0.8719);transform-origin:left 0;">AC</div>
<div class="t" style="left:284.00px;top:25.85px;font-size:7.5px;font-weight:normal;color:#9a9a9a;transform:scaleX(0.9850);transform-origin:left 0;">SENSE:INT</div>
<svg class="r" style="left:394.5px;top:25px" width="9" height="8.5"><polygon points="4.5,0.5 8.5,8 0.5,8" fill="#f0e000" stroke="#666" stroke-width="0.7"/><rect x="4" y="2.8" width="1.1" height="3" fill="#000"/><rect x="4" y="6.3" width="1.1" height="1" fill="#000"/></svg>
<div class="t" style="left:402.50px;top:25.60px;font-size:7.8px;font-weight:normal;color:#9a9a9a;transform:scaleX(0.9841);transform-origin:left 0;">ALIGN OFF</div>
<div class="r" style="left:463.80px;top:24.00px;width:1.00px;height:9.50px;background:#d0d0d0;"></div>
<div class="t" style="left:464.60px;top:25.47px;font-size:8.3px;font-weight:normal;color:#222;transform:scaleX(0.9283);transform-origin:left 0;">08:23:29 PM May 06, 2021</div>
<div class="r" style="left:7.00px;top:33.50px;width:553.00px;height:1.00px;background:#a0a0a0;"></div>
<div class="r" style="left:7.00px;top:33.50px;width:241.50px;height:16.00px;background:#d3d1d5;border-top:1.5px solid #4a4a4a;border-bottom:1.5px solid #4a4a4a;border-right:1px solid #aaa;box-sizing:border-box;"></div>
<div class="t" style="left:7.80px;top:35.83px;font-size:13.2px;font-weight:bold;color:#111;-webkit-text-stroke:0.12px #111;transform:scaleX(1.0340);transform-origin:left 0;">Span 500.000000 MHz</div>
<div class="r" style="left:7.00px;top:51.00px;width:56.00px;height:20.50px;background:#fff;border-top:1.5px solid #505050;border-left:1px solid #707070;border-bottom:2px solid #a8a8a8;border-right:1px solid #b0b0b0;box-sizing:border-box;"></div>
<div class="t" style="left:177.00px;top:59.89px;font-size:8.4px;font-weight:bold;color:#222;transform:scaleX(1.0396);transform-origin:left 0;">IFGain:Low</div>
<svg class="r" style="left:227px;top:49px" width="19" height="11"><path d="M3.2,2 C0.6,2.6 0.3,8 3.5,8 L14.3,8 C17.5,8 17.2,2.6 14.6,2" fill="none" stroke="#808080" stroke-width="1.3"/><polygon points="7.5,5.3 11,8 7.5,10.8" fill="#000"/></svg>
<div class="t" style="left:252.50px;top:36.22px;font-size:8.6px;font-weight:bold;color:#222;transform:scaleX(1.0970);transform-origin:left 0;">Center Freq: 2.594800000 GHz</div>
<div class="t" style="left:252.50px;top:47.62px;font-size:8.6px;font-weight:bold;color:#222;transform:scaleX(1.1087);transform-origin:left 0;">Trig: Free Run</div>
<div class="t" style="left:252.50px;top:58.92px;font-size:8.6px;font-weight:bold;color:#222;transform:scaleX(1.0724);transform-origin:left 0;">#Atten: 10 dB</div>
<div class="t" style="left:355.40px;top:47.62px;font-size:8.6px;font-weight:bold;color:#222;transform:scaleX(1.1261);transform-origin:left 0;">Avg|Hold&gt;10/10</div>
<div class="t" style="left:355.40px;top:58.92px;font-size:8.6px;font-weight:bold;color:#222;transform:scaleX(1.0839);transform-origin:left 0;">Ext Gain: -27.00 dB</div>
<div class="t" style="left:457.80px;top:36.22px;font-size:8.6px;font-weight:bold;color:#222;transform:scaleX(1.0921);transform-origin:left 0;">Radio Std: None</div>
<div class="t" style="left:457.80px;top:58.92px;font-size:8.6px;font-weight:bold;color:#222;transform:scaleX(1.0887);transform-origin:left 0;">Radio Device: BTS</div>
<div class="r" style="left:7.00px;top:72.00px;width:553.00px;height:1.50px;background:#d2cec4;"></div>
<div class="t" style="left:10.00px;top:96.31px;font-size:10.5px;font-weight:normal;color:#7a7a7a;-webkit-text-stroke:0.2px #7a7a7a;transform:scaleX(1.0233);transform-origin:left 0;">10 dB/div</div>
<div class="t" style="left:87.00px;top:95.31px;font-size:11.8px;font-weight:bold;color:#111;transform:scaleX(1.0540);transform-origin:left 0;">Ref 20.00 dBm</div>
<div class="t" style="left:10.00px;top:106.61px;font-size:10.5px;font-weight:bold;color:#8a8a8a;transform:scaleX(0.9662);transform-origin:left 0;">Log</div>
<div class="t" style="right:636.20px;top:121.83px;font-size:10px;font-weight:normal;color:#a6a6a6;transform:scaleX(0.7807);transform-origin:right 0;">10.0</div>
<div class="t" style="right:636.20px;top:139.73px;font-size:10px;font-weight:normal;color:#a6a6a6;transform:scaleX(0.7807);transform-origin:right 0;">0.00</div>
<div class="t" style="right:636.20px;top:156.83px;font-size:10px;font-weight:normal;color:#a6a6a6;transform:scaleX(0.8334);transform-origin:right 0;">-10.0</div>
<div class="t" style="right:636.20px;top:175.53px;font-size:10px;font-weight:normal;color:#a6a6a6;transform:scaleX(0.8334);transform-origin:right 0;">-20.0</div>
<div class="t" style="right:636.20px;top:193.53px;font-size:10px;font-weight:normal;color:#a6a6a6;transform:scaleX(0.8334);transform-origin:right 0;">-30.0</div>
<div class="t" style="right:636.20px;top:210.43px;font-size:10px;font-weight:normal;color:#a6a6a6;transform:scaleX(0.8334);transform-origin:right 0;">-40.0</div>
<div class="t" style="right:636.20px;top:228.93px;font-size:10px;font-weight:normal;color:#a6a6a6;transform:scaleX(0.8334);transform-origin:right 0;">-50.0</div>
<div class="t" style="right:636.20px;top:247.43px;font-size:10px;font-weight:normal;color:#a6a6a6;transform:scaleX(0.8334);transform-origin:right 0;">-60.0</div>
<div class="t" style="right:636.20px;top:264.94px;font-size:10px;font-weight:normal;color:#a6a6a6;transform:scaleX(0.8334);transform-origin:right 0;">-70.0</div>
<svg class="r" style="left:0;top:0" width="665" height="320">
<line x1="33" y1="125.60" x2="556.5" y2="125.60" stroke="#acacac" stroke-width="1.1"/>
<line x1="33" y1="143.50" x2="556.5" y2="143.50" stroke="#a4a4a4" stroke-width="1.1"/>
<line x1="33" y1="160.60" x2="556.5" y2="160.60" stroke="#d8d8d8" stroke-width="1.1"/>
<line x1="33" y1="179.30" x2="556.5" y2="179.30" stroke="#8c8c8c" stroke-width="1.1"/>
<line x1="33" y1="197.30" x2="556.5" y2="197.30" stroke="#d8d8d8" stroke-width="1.1"/>
<line x1="33" y1="214.20" x2="556.5" y2="214.20" stroke="#d8d8d8" stroke-width="1.1"/>
<line x1="33" y1="232.70" x2="556.5" y2="232.70" stroke="#8c8c8c" stroke-width="1.1"/>
<line x1="33" y1="251.20" x2="556.5" y2="251.20" stroke="#b8b8b8" stroke-width="1.1"/>
<line x1="33" y1="268.70" x2="556.5" y2="268.70" stroke="#d8d8d8" stroke-width="1.1"/>
<line x1="84.60" y1="108.4" x2="84.60" y2="284.7" stroke="#8c8c8c" stroke-width="1.1"/>
<line x1="136.50" y1="108.4" x2="136.50" y2="284.7" stroke="#e8e8e8" stroke-width="1.1"/>
<line x1="190.50" y1="108.4" x2="190.50" y2="284.7" stroke="#b4b4b4" stroke-width="1.1"/>
<line x1="242.00" y1="108.4" x2="242.00" y2="284.7" stroke="#e4e4e4" stroke-width="1.1"/>
<line x1="294.80" y1="108.4" x2="294.80" y2="284.7" stroke="#8c8c8c" stroke-width="1.1"/>
<line x1="347.00" y1="108.4" x2="347.00" y2="284.7" stroke="#e4e4e4" stroke-width="1.1"/>
<line x1="400.40" y1="108.4" x2="400.40" y2="284.7" stroke="#d2d2d2" stroke-width="1.1"/>
<line x1="452.00" y1="108.4" x2="452.00" y2="284.7" stroke="#dedede" stroke-width="1.1"/>
<line x1="504.70" y1="108.4" x2="504.70" y2="284.7" stroke="#b8b8b8" stroke-width="1.1"/>
<line x1="32" y1="108.4" x2="558" y2="108.4" stroke="#8a8a8a" stroke-width="2"/>
<line x1="33" y1="110.8" x2="33" y2="285" stroke="#959595" stroke-width="1.2"/>
<line x1="557" y1="111" x2="557" y2="285" stroke="#8a8a8a" stroke-width="1.5"/>
<polyline points="33,285 33,179.3 135.6,179.3 135.6,285" fill="none" stroke="#7c7cff" stroke-width="1.4"/>
<polyline points="137.3,285 137.3,174.7 241.2,174.7 241.2,285" fill="none" stroke="#7c7cff" stroke-width="1.4"/>
<polyline points="242.9,285 242.9,104.8 346.6,104.8 346.6,285" fill="none" stroke="#7c7cff" stroke-width="1.4"/>
<polyline points="348,285 348,175.5 451.5,175.5 451.5,285" fill="none" stroke="#7c7cff" stroke-width="1.4"/>
<polyline points="452.8,285 452.8,179.3 556.5,179.3 556.5,285" fill="none" stroke="#7c7cff" stroke-width="1.4"/>
<line x1="32.5" y1="286.2" x2="557" y2="286.2" stroke="#a8a8a8" stroke-width="1"/>
<line x1="32.5" y1="285.1" x2="557" y2="285.1" stroke="#5050c8" stroke-width="1.6"/>
<path d="M33.0,226.2 L33.7,225.3 L34.4,225.7 L35.1,226.5 L35.8,226.6 L36.6,226.3 L37.3,226.6 L38.0,226.4 L38.7,225.5 L39.4,226.3 L40.1,226.2 L40.8,226.2 L41.5,226.2 L42.2,226.3 L42.9,226.2 L43.7,227.0 L44.4,226.0 L45.1,226.1 L45.8,227.1 L46.5,226.8 L47.2,226.9 L47.9,226.4 L48.6,226.7 L49.3,227.0 L50.1,226.8 L50.8,226.7 L51.5,226.3 L52.2,226.1 L52.9,227.1 L53.6,226.0 L54.3,226.2 L55.0,226.6 L55.7,226.1 L56.4,226.8 L57.2,227.3 L57.9,226.9 L58.6,227.0 L59.3,226.9 L60.0,227.2 L60.7,227.3 L61.4,227.2 L62.1,227.5 L62.8,226.3 L63.5,227.3 L64.2,227.3 L64.9,226.7 L65.6,227.1 L66.4,227.1 L67.1,226.9 L67.8,227.0 L68.5,226.6 L69.2,226.6 L69.9,226.6 L70.6,226.7 L71.3,227.6 L72.0,227.4 L72.7,227.2 L73.4,226.5 L74.1,227.1 L74.8,226.7 L75.5,227.5 L76.2,226.9 L76.9,226.9 L77.6,227.7 L78.4,227.6 L79.1,227.5 L79.8,226.8 L80.5,227.4 L81.2,226.7 L81.9,227.9 L82.6,226.6 L83.3,227.3 L84.0,226.6 L84.7,227.2 L85.4,226.9 L86.1,226.7 L86.8,226.6 L87.5,227.1 L88.2,227.6 L88.9,227.6 L89.6,227.4 L90.3,227.0 L91.0,227.8 L91.7,226.5 L92.4,226.6 L93.1,226.7 L93.8,227.7 L94.5,226.6 L95.2,226.7 L95.9,227.8 L96.6,227.5 L97.4,227.1 L98.1,227.6 L98.8,226.9 L99.5,226.5 L100.2,226.6 L100.9,227.9 L101.6,227.9 L102.3,227.6 L103.0,227.3 L103.7,227.9 L104.4,227.0 L105.1,227.2 L105.8,227.4 L106.5,226.8 L107.2,227.0 L107.9,226.7 L108.6,227.9 L109.3,227.2 L110.0,226.9 L110.7,226.7 L111.4,227.3 L112.1,227.0 L112.8,227.4 L113.5,227.9 L114.2,226.8 L114.9,227.8 L115.6,228.0 L116.3,226.9 L117.0,227.8 L117.7,226.7 L118.4,226.7 L119.1,226.8 L119.9,226.9 L120.6,227.3 L121.3,226.9 L122.0,227.7 L122.7,227.1 L123.4,227.1 L124.1,227.1 L124.8,226.6 L125.5,228.0 L126.2,227.4 L126.9,227.1 L127.6,227.2 L128.3,226.6 L129.0,227.3 L129.8,227.0 L130.5,227.6 L131.2,227.4 L132.0,227.6 L132.8,228.3 L133.5,227.5 L134.2,227.9 L135.0,228.1 L135.7,228.8 L136.4,228.0 L137.1,229.1 L137.9,228.5 L138.6,229.2 L139.3,228.7 L140.0,228.2 L140.7,229.6 L141.4,228.6 L142.1,229.5 L142.9,229.1 L143.6,229.4 L144.3,229.2 L145.0,229.7 L145.7,229.8 L146.4,229.2 L147.1,229.0 L147.9,229.5 L148.6,230.3 L149.3,229.0 L150.0,229.2 L150.7,229.4 L151.4,229.9 L152.1,230.1 L152.9,229.4 L153.6,230.0 L154.3,229.4 L155.0,229.9 L155.7,230.1 L156.4,230.4 L157.1,229.4 L157.9,229.6 L158.6,229.2 L159.3,229.4 L160.0,229.7 L160.7,229.2 L161.4,229.6 L162.1,229.6 L162.9,229.9 L163.6,230.4 L164.3,229.3 L165.0,229.0 L165.7,228.9 L166.4,228.1 L167.1,227.5 L167.9,227.7 L168.6,227.5 L169.3,227.2 L170.0,225.8 L170.7,226.1 L171.4,226.0 L172.1,225.2 L172.9,225.5 L173.6,224.6 L174.3,225.4 L175.0,225.3 L175.7,225.0 L176.4,223.7 L177.1,223.9 L177.9,224.4 L178.6,224.3 L179.3,224.0 L180.0,223.0 L180.7,222.6 L181.4,223.2 L182.1,223.3 L182.9,222.6 L183.6,222.7 L184.3,222.4 L185.0,221.9 L185.7,222.1 L186.4,221.9 L187.1,221.4 L187.8,222.2 L188.5,221.8 L189.2,221.9 L189.9,221.8 L190.7,222.2 L191.4,221.0 L192.1,221.8 L192.8,222.0 L193.5,222.3 L194.2,221.5 L194.9,221.3 L195.6,220.9 L196.3,221.4 L197.0,220.8 L197.7,221.5 L198.4,221.2 L199.1,220.6 L199.8,221.6 L200.5,221.0 L201.2,221.3 L202.0,220.9 L202.7,220.7 L203.4,220.8 L204.1,220.7 L204.8,221.8 L205.5,221.2 L206.2,221.4 L206.9,221.5 L207.6,221.4 L208.3,221.6 L209.0,221.4 L209.7,220.7 L210.4,221.1 L211.1,221.0 L211.8,221.3 L212.6,221.1 L213.3,220.8 L214.0,220.8 L214.7,220.5 L215.4,221.2 L216.1,219.9 L216.8,220.1 L217.5,220.9 L218.2,220.7 L218.9,220.1 L219.6,220.7 L220.4,220.7 L221.1,220.2 L221.8,221.3 L222.5,220.1 L223.2,221.0 L223.9,221.2 L224.6,221.4 L225.4,221.3 L226.1,220.6 L226.8,221.0 L227.5,220.3 L228.2,220.9 L228.9,220.5 L229.6,219.2 L230.4,218.4 L231.1,218.6 L231.8,218.2 L232.5,218.0 L233.2,217.0 L234.0,217.1 L234.8,215.5 L235.5,215.8 L236.2,215.6 L237.0,214.7 L237.8,214.5 L238.5,214.3 L239.2,214.2 L240.0,213.0 L241.0,212.5 L241.8,137.8 L242.5,137.8 L243.3,137.6 L244.0,138.4 L244.7,138.5 L245.4,138.3 L246.1,137.9 L246.8,138.3 L247.5,137.8 L248.2,137.7 L248.9,137.6 L249.6,138.2 L250.3,137.5 L251.0,137.3 L251.7,137.9 L252.4,137.0 L253.1,137.2 L253.8,137.3 L254.5,137.8 L255.2,137.3 L255.9,137.3 L256.6,137.1 L257.4,138.1 L258.1,138.2 L258.8,138.1 L259.5,137.4 L260.2,136.7 L260.9,138.1 L261.6,137.6 L262.3,136.8 L263.0,137.1 L263.7,136.7 L264.4,136.7 L265.1,136.5 L265.8,136.9 L266.5,137.0 L267.2,137.2 L267.9,136.5 L268.6,137.3 L269.3,137.5 L270.0,136.5 L270.7,137.1 L271.4,137.2 L272.1,136.5 L272.8,136.9 L273.5,136.8 L274.2,137.0 L274.9,136.6 L275.6,137.1 L276.3,137.1 L277.0,136.9 L277.7,136.6 L278.4,136.7 L279.1,136.5 L279.8,136.7 L280.5,136.2 L281.2,136.6 L281.9,136.3 L282.6,137.0 L283.4,136.1 L284.1,136.3 L284.8,136.5 L285.5,136.6 L286.2,136.9 L286.9,136.8 L287.6,136.7 L288.3,136.8 L289.0,136.0 L289.7,136.0 L290.4,136.9 L291.1,137.0 L291.8,136.2 L292.5,135.9 L293.2,136.5 L293.9,136.1 L294.6,136.5 L295.3,136.7 L296.0,135.7 L296.7,136.0 L297.4,137.0 L298.1,137.0 L298.8,136.1 L299.5,136.6 L300.2,136.7 L300.9,136.2 L301.6,136.3 L302.3,135.5 L303.0,135.4 L303.7,136.5 L304.4,135.7 L305.1,136.4 L305.8,135.5 L306.5,136.5 L307.2,136.1 L307.9,135.8 L308.6,135.3 L309.3,136.3 L310.0,136.7 L310.7,135.6 L311.4,136.1 L312.1,135.5 L312.9,135.8 L313.6,135.3 L314.3,135.4 L315.0,136.0 L315.7,136.1 L316.4,136.1 L317.1,136.5 L317.8,135.2 L318.5,135.2 L319.2,135.3 L319.9,135.5 L320.6,136.0 L321.3,136.2 L322.0,136.3 L322.7,135.5 L323.4,135.8 L324.1,135.7 L324.8,135.1 L325.5,135.1 L326.2,135.6 L326.9,135.1 L327.6,134.8 L328.3,135.4 L329.0,136.2 L329.7,135.3 L330.5,135.7 L331.2,136.2 L331.9,135.1 L332.7,135.3 L333.4,135.0 L334.1,135.0 L334.9,135.3 L335.6,135.1 L336.3,135.9 L337.1,135.9 L337.8,135.3 L338.5,136.1 L339.3,135.8 L340.0,136.3 L340.8,135.9 L341.6,135.6 L342.4,136.3 L343.2,137.1 L344.0,136.9 L345.0,138.0 L346.0,137.5 L346.5,211.6 L347.2,211.4 L348.0,212.6 L348.7,213.2 L349.4,213.6 L350.2,214.1 L350.9,214.1 L351.6,214.8 L352.4,215.6 L353.1,215.7 L353.9,216.1 L354.6,217.1 L355.3,217.7 L356.1,218.3 L356.8,218.9 L357.5,219.2 L358.3,220.2 L359.0,220.4 L359.7,221.1 L360.4,220.6 L361.1,221.7 L361.9,220.5 L362.6,221.0 L363.3,222.1 L364.0,221.0 L364.7,221.2 L365.4,222.1 L366.1,222.6 L366.9,222.0 L367.6,222.8 L368.3,223.0 L369.0,222.2 L369.7,223.0 L370.4,223.3 L371.1,223.4 L371.9,222.7 L372.6,222.7 L373.3,223.3 L374.0,223.0 L374.7,222.7 L375.4,223.2 L376.1,223.8 L376.9,223.7 L377.6,223.2 L378.3,223.3 L379.0,224.1 L379.7,224.3 L380.4,224.7 L381.1,224.5 L381.9,224.7 L382.6,224.9 L383.3,225.0 L384.0,224.4 L384.7,225.8 L385.4,225.9 L386.1,226.0 L386.9,225.6 L387.6,226.0 L388.3,225.4 L389.0,225.1 L389.7,225.3 L390.4,225.2 L391.1,225.8 L391.9,226.1 L392.6,225.5 L393.3,226.1 L394.0,226.1 L394.7,226.1 L395.4,226.7 L396.1,226.4 L396.9,226.7 L397.6,226.9 L398.3,226.4 L399.0,226.0 L399.7,225.8 L400.4,226.2 L401.1,227.2 L401.9,226.1 L402.6,226.3 L403.3,227.2 L404.0,226.3 L404.7,226.4 L405.4,226.7 L406.1,226.2 L406.9,226.3 L407.6,226.8 L408.3,227.0 L409.0,226.6 L409.7,226.8 L410.4,227.9 L411.1,227.6 L411.9,227.3 L412.6,226.9 L413.3,226.8 L414.0,227.0 L414.7,226.9 L415.4,227.0 L416.1,228.0 L416.9,228.3 L417.6,227.7 L418.3,228.3 L419.0,227.1 L419.7,228.1 L420.4,227.6 L421.1,227.8 L421.8,227.8 L422.6,228.0 L423.3,228.2 L424.0,228.1 L424.7,228.3 L425.4,228.0 L426.1,227.0 L426.8,226.9 L427.5,227.2 L428.2,227.5 L429.0,227.1 L429.7,227.0 L430.4,227.1 L431.1,227.0 L431.8,227.4 L432.5,226.8 L433.2,227.5 L433.9,228.0 L434.6,227.4 L435.4,227.3 L436.1,227.8 L436.8,227.1 L437.5,227.0 L438.2,227.5 L438.9,227.2 L439.6,228.0 L440.3,227.3 L441.0,227.5 L441.8,227.9 L442.5,227.0 L443.2,227.0 L443.9,227.1 L444.6,227.7 L445.3,227.0 L446.0,227.5 L446.7,227.0 L447.4,227.1 L448.2,227.4 L448.9,227.5 L449.6,227.5 L450.3,227.4 L451.0,226.7 L451.7,226.5 L452.4,226.8 L453.2,227.1 L453.9,227.5 L454.6,227.0 L455.3,227.1 L456.0,226.0 L456.8,227.3 L457.5,227.0 L458.2,226.1 L458.9,226.6 L459.6,226.9 L460.4,225.7 L461.1,226.3 L461.8,227.0 L462.5,226.8 L463.2,225.9 L464.0,226.2 L464.7,225.4 L465.4,225.5 L466.1,225.9 L466.8,225.6 L467.6,225.7 L468.3,226.2 L469.0,226.3 L469.7,225.8 L470.4,225.3 L471.1,225.3 L471.8,226.4 L472.5,226.2 L473.2,225.6 L473.9,225.3 L474.6,225.8 L475.3,225.2 L476.0,226.4 L476.7,225.4 L477.5,226.6 L478.2,225.2 L478.9,225.8 L479.6,225.5 L480.3,226.5 L481.0,226.5 L481.7,225.9 L482.4,225.4 L483.1,226.6 L483.8,225.8 L484.5,226.6 L485.2,226.4 L485.9,225.5 L486.6,226.6 L487.3,225.8 L488.0,225.6 L488.7,226.2 L489.4,226.8 L490.1,226.3 L490.8,226.3 L491.5,225.8 L492.2,226.5 L492.9,226.3 L493.6,226.6 L494.4,226.8 L495.1,226.0 L495.8,226.9 L496.5,225.5 L497.2,226.3 L497.9,226.2 L498.6,226.9 L499.3,226.6 L500.0,226.4 L500.7,225.6 L501.4,226.4 L502.1,225.7 L502.8,226.3 L503.5,225.6 L504.2,226.9 L504.9,225.7 L505.6,225.7 L506.3,226.3 L507.0,226.0 L507.7,226.9 L508.4,226.2 L509.1,226.3 L509.8,226.5 L510.5,226.1 L511.3,226.0 L512.0,226.8 L512.7,226.9 L513.4,226.1 L514.1,226.9 L514.8,226.0 L515.5,226.3 L516.2,226.5 L516.9,227.1 L517.6,227.0 L518.3,227.0 L519.0,227.2 L519.7,227.3 L520.4,226.4 L521.1,227.2 L521.8,226.9 L522.5,227.1 L523.2,227.0 L523.9,226.8 L524.6,226.4 L525.3,227.4 L526.0,227.5 L526.7,226.7 L527.4,226.7 L528.1,226.7 L528.8,227.3 L529.5,227.2 L530.2,228.1 L530.9,227.9 L531.6,227.5 L532.3,228.2 L533.0,227.9 L533.7,228.0 L534.4,227.4 L535.1,228.3 L535.8,228.0 L536.5,227.6 L537.2,228.3 L537.9,228.1 L538.6,227.9 L539.3,227.9 L540.0,229.2 L540.7,228.2 L541.5,229.3 L542.2,228.9 L542.9,228.5 L543.6,228.6 L544.4,228.9 L545.1,228.7 L545.8,229.9 L546.5,229.6 L547.3,229.7 L548.0,230.4 L548.7,230.1 L549.5,230.0 L550.2,229.9 L550.9,229.6 L551.6,229.9 L552.4,230.3 L553.1,230.3 L553.8,231.2 L554.5,230.9 L555.3,230.5 L556.0,231.2" fill="none" stroke="#f0a014" stroke-width="1.2"/>
<line x1="34" y1="137.9" x2="134.5" y2="137.9" stroke="#606060" stroke-width="1.05"/>
<rect x="33.6" y="136.9" width="2" height="2" fill="#111"/>
<rect x="132.9" y="136.9" width="2" height="2" fill="#111"/>
<line x1="140" y1="129.0" x2="239" y2="129.0" stroke="#606060" stroke-width="1.05"/>
<rect x="139.6" y="128.0" width="2" height="2" fill="#111"/>
<rect x="237.4" y="128.0" width="2" height="2" fill="#111"/>
<line x1="244" y1="119.8" x2="344.5" y2="119.8" stroke="#606060" stroke-width="1.05"/>
<rect x="243.6" y="118.8" width="2" height="2" fill="#111"/>
<rect x="342.9" y="118.8" width="2" height="2" fill="#111"/>
<line x1="349" y1="129.0" x2="449" y2="129.0" stroke="#606060" stroke-width="1.05"/>
<rect x="348.6" y="128.0" width="2" height="2" fill="#111"/>
<rect x="447.4" y="128.0" width="2" height="2" fill="#111"/>
<line x1="453" y1="137.9" x2="555" y2="137.9" stroke="#606060" stroke-width="1.05"/>
<rect x="452.6" y="136.9" width="2" height="2" fill="#111"/>
<rect x="553.4" y="136.9" width="2" height="2" fill="#111"/>
</svg>
<div class="t" style="left:87.00px;top:143.13px;font-size:10px;font-weight:normal;color:#555;transform:translateX(-50%) scaleX(1.0277);transform-origin:center 0;">-51.1 dBc</div>
<div class="t" style="left:191.50px;top:133.73px;font-size:10px;font-weight:normal;color:#555;transform:translateX(-50%) scaleX(1.0277);transform-origin:center 0;">-48.4 dBc</div>
<div class="t" style="left:296.00px;top:124.53px;font-size:10px;font-weight:normal;color:#555;transform:translateX(-50%) scaleX(1.0277);transform-origin:center 0;">30.6 dBm</div>
<div class="t" style="left:401.50px;top:133.73px;font-size:10px;font-weight:normal;color:#555;transform:translateX(-50%) scaleX(1.0277);transform-origin:center 0;">-48.9 dBc</div>
<div class="t" style="left:506.00px;top:143.13px;font-size:10px;font-weight:normal;color:#555;transform:translateX(-50%) scaleX(1.0277);transform-origin:center 0;">-51.1 dBc</div>
<div class="t" style="right:108.00px;top:218.27px;font-size:7px;font-weight:normal;color:#f0a830;transform:scaleX(1.0018);transform-origin:right 0;">Average</div>
<div class="t" style="left:9.50px;top:290.11px;font-size:11.8px;font-weight:bold;color:#111;transform:scaleX(1.0436);transform-origin:left 0;">Center&nbsp; 2.595 GHz</div>
<div class="t" style="left:9.50px;top:304.01px;font-size:11.8px;font-weight:bold;color:#111;transform:scaleX(1.0449);transform-origin:left 0;">#Res BW&nbsp; 220 kHz</div>
<div class="t" style="left:272.80px;top:304.01px;font-size:11.8px;font-weight:bold;color:#111;transform:scaleX(1.0494);transform-origin:left 0;">VBW&nbsp; 22 kHz</div>
<div class="t" style="right:108.30px;top:290.11px;font-size:11.8px;font-weight:bold;color:#111;transform:scaleX(1.0425);transform-origin:right 0;">Span 500 MHz</div>
<div class="t" style="right:108.30px;top:304.01px;font-size:11.8px;font-weight:bold;color:#111;transform:scaleX(1.0303);transform-origin:right 0;">Sweep&nbsp;&nbsp; 256.5 ms</div>
<div class="r" style="left:7.00px;top:319.50px;width:553.00px;height:4.00px;background:#e4e0d4;border-top:1px solid #c9c4b4;border-bottom:1px solid #c9c4b4;box-sizing:border-box;"></div>
<div class="t" style="left:13.80px;top:329.13px;font-size:11.3px;font-weight:normal;color:#1e1e1e;transform:scaleX(1.0684);transform-origin:left 0;">Total Carrier Power</div>
<div class="t" style="left:140.80px;top:329.06px;font-size:9.5px;font-weight:normal;color:#666;transform:scaleX(1.0659);transform-origin:left 0;">30.568 dBm/ 98.28 MHz</div>
<div class="t" style="left:316.00px;top:329.27px;font-size:11.5px;font-weight:normal;color:#111;transform:scaleX(1.0975);transform-origin:left 0;">ACP-IBW</div>
<div class="t" style="left:14.60px;top:360.93px;font-size:11.3px;font-weight:normal;color:#1e1e1e;transform:scaleX(1.0633);transform-origin:left 0;">Carrier Power</div>
<div class="t" style="left:176.60px;top:360.69px;font-size:11px;font-weight:bold;color:#222;transform:scaleX(0.9775);transform-origin:left 0;">Filter</div>
<div class="t" style="left:383.70px;top:348.13px;font-size:11.3px;font-weight:bold;color:#222;transform:scaleX(0.9765);transform-origin:left 0;">Lower</div>
<div class="t" style="left:463.40px;top:348.13px;font-size:11.3px;font-weight:bold;color:#222;transform:scaleX(1.0233);transform-origin:left 0;">Upper</div>
<div class="t" style="left:225.00px;top:363.83px;font-size:9.3px;font-weight:normal;color:#444;transform:scaleX(1.0789);transform-origin:left 0;">Offset Freq</div>
<div class="t" style="left:296.50px;top:363.83px;font-size:9.3px;font-weight:normal;color:#444;transform:scaleX(1.0902);transform-origin:left 0;">Integ BW</div>
<div class="t" style="right:277.30px;top:363.83px;font-size:9.3px;font-weight:normal;color:#444;transform:scaleX(1.1041);transform-origin:right 0;">dBc</div>
<div class="t" style="right:233.10px;top:363.83px;font-size:9.3px;font-weight:normal;color:#444;transform:scaleX(1.0196);transform-origin:right 0;">dBm</div>
<div class="t" style="right:197.10px;top:363.83px;font-size:9.3px;font-weight:normal;color:#444;transform:scaleX(1.1041);transform-origin:right 0;">dBc</div>
<div class="t" style="right:155.60px;top:363.83px;font-size:9.3px;font-weight:normal;color:#444;transform:scaleX(1.0196);transform-origin:right 0;">dBm</div>
<div class="t" style="left:528.30px;top:363.83px;font-size:9.3px;font-weight:normal;color:#444;transform:scaleX(1.0642);transform-origin:left 0;">Filter</div>
<div class="r" style="left:10.80px;top:375.60px;width:203.20px;height:96.00px;border:1px solid #ccd8e6;box-sizing:border-box;"></div>
<div class="t" style="left:23.00px;top:378.63px;font-size:9.3px;font-weight:normal;color:#40ee40;">1</div>
<div class="t" style="left:47.00px;top:378.63px;font-size:9.3px;font-weight:normal;color:#40ee40;transform:scaleX(1.0813);transform-origin:left 0;">30.568 dBm /&nbsp;&nbsp; 98.28 MHz</div>
<div class="t" style="left:173.60px;top:378.63px;font-size:9.3px;font-weight:normal;color:#40ee40;transform:scaleX(1.0918);transform-origin:left 0;">OFF</div>
<div class="r" style="left:216.60px;top:374.30px;width:340.20px;height:103.00px;border:1.7px solid #303030;border-left-width:2.2px;border-bottom-width:2.4px;box-sizing:border-box;"></div>
<div class="t" style="left:226.00px;top:378.73px;font-size:9.3px;font-weight:normal;color:#444;transform:scaleX(1.0674);transform-origin:left 0;">100.0 MHz</div>
<div class="t" style="left:296.50px;top:378.73px;font-size:9.3px;font-weight:normal;color:#444;transform:scaleX(1.0808);transform-origin:left 0;">98.28 MHz</div>
<div class="t" style="right:278.50px;top:378.73px;font-size:9.3px;font-weight:normal;color:#444;transform:scaleX(1.0237);transform-origin:right 0;">-48.42</div>
<div class="t" style="right:234.00px;top:378.73px;font-size:9.3px;font-weight:normal;color:#444;transform:scaleX(1.0237);transform-origin:right 0;">-17.85</div>
<div class="t" style="right:198.00px;top:378.73px;font-size:9.3px;font-weight:normal;color:#444;transform:scaleX(1.0237);transform-origin:right 0;">-48.93</div>
<div class="t" style="right:156.00px;top:378.73px;font-size:9.3px;font-weight:normal;color:#444;transform:scaleX(1.0237);transform-origin:right 0;">-18.37</div>
<div class="t" style="left:527.00px;top:378.73px;font-size:9.3px;font-weight:normal;color:#444;transform:scaleX(1.0218);transform-origin:left 0;">OFF</div>
<div class="t" style="left:226.00px;top:394.43px;font-size:9.3px;font-weight:normal;color:#444;transform:scaleX(1.0674);transform-origin:left 0;">200.0 MHz</div>
<div class="t" style="left:296.50px;top:394.43px;font-size:9.3px;font-weight:normal;color:#444;transform:scaleX(1.0808);transform-origin:left 0;">98.28 MHz</div>
<div class="t" style="right:278.50px;top:394.43px;font-size:9.3px;font-weight:normal;color:#444;transform:scaleX(1.0237);transform-origin:right 0;">-51.12</div>
<div class="t" style="right:234.00px;top:394.43px;font-size:9.3px;font-weight:normal;color:#444;transform:scaleX(1.0237);transform-origin:right 0;">-20.55</div>
<div class="t" style="right:198.00px;top:394.43px;font-size:9.3px;font-weight:normal;color:#444;transform:scaleX(1.0237);transform-origin:right 0;">-51.09</div>
<div class="t" style="right:156.00px;top:394.43px;font-size:9.3px;font-weight:normal;color:#444;transform:scaleX(1.0237);transform-origin:right 0;">-20.52</div>
<div class="t" style="left:527.00px;top:394.43px;font-size:9.3px;font-weight:normal;color:#444;transform:scaleX(1.0218);transform-origin:left 0;">OFF</div>
<div class="r" style="left:559.50px;top:23.00px;width:3.00px;height:455.50px;background:#e6e2d6;border-left:1px solid #c8c3b3;border-right:1px solid #8c8a84;box-sizing:border-box;"></div>
<div class="t" style="left:612.20px;top:31.21px;font-size:10.5px;font-weight:normal;color:#222;-webkit-text-stroke:0.35px #222;transform:translateX(-50%) scaleX(1.0273);transform-origin:center 0;">Span</div>
<div class="r" style="left:562.50px;top:49.50px;width:99.50px;height:51.20px;border-top:1.5px solid #303030;border-left:1.5px solid #303030;border-bottom:1.5px solid #cccccc;box-sizing:border-box;"></div>
<div class="r" style="left:562.50px;top:100.70px;width:99.50px;height:71.70px;border-top:1px solid #d8d8d8;box-sizing:border-box;"></div>
<div class="r" style="left:562.50px;top:172.40px;width:99.50px;height:51.80px;border-top:1.5px solid #303030;border-left:1.5px solid #303030;border-bottom:1.5px solid #8a8a8a;box-sizing:border-box;"></div>
<div class="r" style="left:562.50px;top:224.20px;width:99.50px;height:71.00px;border-top:1px solid #d8d8d8;box-sizing:border-box;"></div>
<div class="r" style="left:562.50px;top:295.20px;width:99.50px;height:51.10px;border-top:1.5px solid #303030;border-left:1.5px solid #303030;border-bottom:1.5px solid #303030;box-sizing:border-box;"></div>
<div class="r" style="left:562.50px;top:346.30px;width:99.50px;height:132.20px;border-top:1px solid #d8d8d8;box-sizing:border-box;"></div>
<div class="r" style="left:661.00px;top:23.30px;width:1.80px;height:455.00px;background:#2a2a50;"></div>
<div class="t" style="right:5.20px;top:62.17px;font-size:11.5px;font-weight:bold;color:#222;transform:scaleX(1.0596);transform-origin:right 0;">Span</div>
<div class="t" style="right:5.20px;top:79.48px;font-size:10.3px;font-weight:normal;color:#1a1a1a;-webkit-text-stroke:0.2px #1a1a1a;transform:scaleX(1.0123);transform-origin:right 0;">500.000000 MHz</div>
<div class="t" style="right:5.50px;top:193.18px;font-size:11.6px;font-weight:bold;color:#222;transform:scaleX(1.0312);transform-origin:right 0;">Full Span</div>
<div class="t" style="right:5.50px;top:315.71px;font-size:11.8px;font-weight:bold;color:#222;transform:scaleX(1.0144);transform-origin:right 0;">Last Span</div>
<div class="r" style="left:7.00px;top:478.00px;width:655.00px;height:19.00px;background:#fff;border-top:1.5px solid #d6d2c6;box-sizing:border-box;"></div>
<div class="r" style="left:26.00px;top:479.00px;width:1.00px;height:18.00px;background:#c8c3b3;"></div>
<div class="t" style="left:8.00px;top:485.27px;font-size:7px;font-weight:bold;color:#555;transform:scaleX(1.0029);transform-origin:left 0;">MSG</div>
<div class="r" style="left:423.00px;top:479.00px;width:1.00px;height:18.00px;background:#c8c3b3;"></div>
<div class="r" style="left:454.00px;top:479.00px;width:1.00px;height:18.00px;background:#c8c3b3;"></div>
<svg class="r" style="left:409px;top:479px" width="15" height="15"><path d="M1,4 L4,4 L7,1 L7,12 L4,9 L1,9 Z" fill="#ddd" stroke="#444" stroke-width="1"/><circle cx="10" cy="10.5" r="3.6" fill="#e33" /><line x1="7.8" y1="12.3" x2="12.2" y2="8.7" stroke="#fff" stroke-width="1.2"/></svg>
<div class="t" style="left:424.50px;top:484.67px;font-size:6.3px;font-weight:bold;color:#333;transform:scaleX(1.1127);transform-origin:left 0;">STATUS</div>
<svg class="r" style="left:455px;top:481px" width="13" height="13"><circle cx="6.3" cy="6.3" r="6" fill="#d81818"/><path d="M3.6,3.6 L9,9 M9,3.6 L3.6,9" stroke="#fff" stroke-width="2"/></svg>
<div class="t" style="left:469.50px;top:482.31px;font-size:10.5px;font-weight:normal;color:#2a2a2a;transform:scaleX(1.0070);transform-origin:left 0;">Align Now, All required</div>
</div>
</body></html>
